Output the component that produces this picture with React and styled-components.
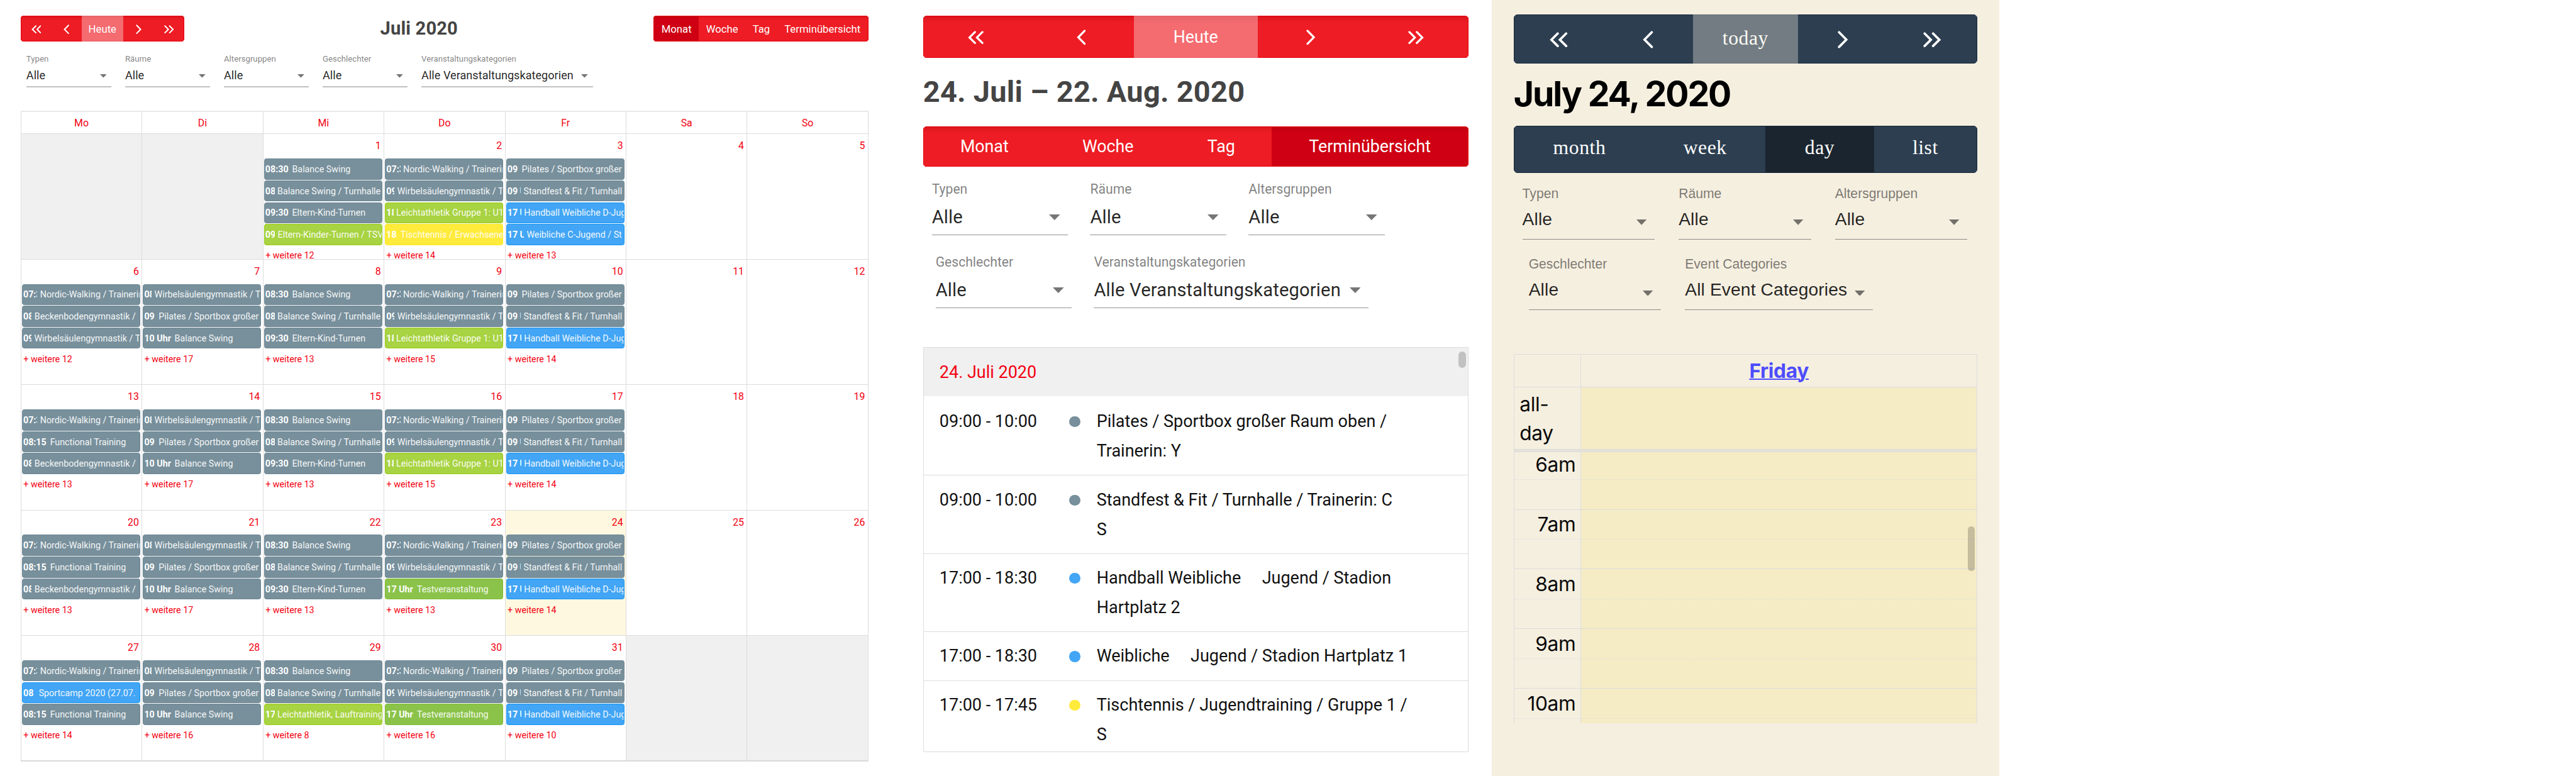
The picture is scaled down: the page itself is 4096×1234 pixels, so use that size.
import React from "react";
import styled, { createGlobalStyle, ThemeProvider, css } from "styled-components";

const GlobalStyle = createGlobalStyle`
  html, body { margin: 0; padding: 0; background: #fff; overflow: hidden; }
  *, *::before, *::after { box-sizing: border-box; }
`;

const roboto = `Roboto, "Liberation Sans", sans-serif`;
const arial = `"Liberation Sans", Arial, sans-serif`;
const inter = `Inter, Roboto, sans-serif`;
const times = `"Liberation Serif", "Times New Roman", serif`;

/* ---------- themes ---------- */

const monthTheme = {
  button: { bg: "#ee1c24", active: "#cf0013", edge: "#e2000b", shade: "rgba(150,0,0,.16)", font: roboto, size: 19, spacing: 0, radius: 5 },
  icon: 1,
  filter: {
    font: roboto, labelSize: 15, labelLine: 20, gap: 4.8, valueSize: 20.5, valueLine: 30, valueSpacing: 0.05,
    box: 36.3, border: "2.3px solid #c1c1c1", pad: 8.6, caretW: 12.3, caretH: 6.3, caretTop: 13.1,
    caret: "#757575", colGap: 24.8,
  },
};

const listTheme = {
  button: { bg: "#ee1c24", active: "#cf0013", edge: "#e2000b", shade: "rgba(150,0,0,.2)", font: roboto, size: 30.4, spacing: 0, radius: 6 },
  icon: 1.6,
  filter: {
    font: roboto, labelSize: 24, labelLine: 30, gap: 12.9, valueSize: 33, valueLine: 44, valueSpacing: 0.2,
    box: 54.7, border: "1.3px solid #949494", pad: 14.5, caretW: 20, caretH: 10.3, caretTop: 17.3,
    caret: "#757575", colGap: 39.7,
  },
};

const dayTheme = {
  button: { bg: "#2c3e50", active: "#1a252f", edge: "#14243a", shade: "rgba(0,0,0,0)", font: times, size: 36, spacing: 0.6, radius: 7 },
  icon: 1.82,
  filter: {
    font: arial, labelSize: 24, labelLine: 30, gap: 8.5, valueSize: 32, valueLine: 44, valueSpacing: 0.15,
    box: 59.1, border: "1.3px solid #8f8c84", pad: 14.6, caretW: 18.5, caretH: 10, caretTop: 23.1,
    caret: "#73706a", colGap: 43,
  },
};

/* ---------- page ---------- */

const Page = styled.main`
  zoom: 0.88143;
  display: flex;
  align-items: flex-start;
  width: 4647px;
  height: 1400px;
  overflow: hidden;
  background: #fff;
`;

const MonthPanel = styled.section`
  width: 1529.4px;
  margin-left: 37.2px;
  padding-top: 28.3px;
  font-family: ${roboto};
`;

const ListPanel = styled.section`
  width: 984.3px;
  margin-left: 98.6px;
  padding-top: 28.7px;
  font-family: ${roboto};
`;

const DayPanel = styled.section`
  width: 916.4px;
  height: 1400px;
  margin-left: 41.1px;
  padding: 26.4px 40px 0;
  background: #f5efe0;
  font-family: ${inter};
`;

/* ---------- toolbar ---------- */

const Toolbar = styled.header`
  display: flex;
  align-items: center;
  justify-content: space-between;
`;

const Group = styled.div`
  display: flex;
  height: ${(p) => p.$h}px;
  border-radius: ${(p) => p.theme.button.radius}px;
  overflow: hidden;
`;

const Button = styled.button`
  display: flex;
  align-items: center;
  justify-content: center;
  width: ${(p) => p.$w}px;
  margin: 0;
  padding: ${(p) => (p.$drop > 0 ? p.$drop * 2 : 0)}px 0 ${(p) => (p.$drop < 0 ? -p.$drop * 2 : 0)}px;
  border: 0 solid ${(p) => p.theme.button.edge};
  border-width: 1.2px 0;
  background: linear-gradient(${(p) => p.theme.button.shade}, transparent 16%) ${(p) => p.theme.button.bg};
  color: #fff;
  font: 400 ${(p) => p.theme.button.size}px ${(p) => p.theme.button.font};
  letter-spacing: ${(p) => p.theme.button.spacing}px;
  white-space: nowrap;
  & + & {
    box-shadow: inset 1px 0 0 rgba(0, 0, 0, ${(p) => (p.theme.icon > 1.7 ? 0 : 0.05)});
  }
  &:first-child { border-left-width: 1.2px; }
  &:last-child { border-right-width: 1.2px; }
  ${(p) => p.$active && css`background-color: ${p.theme.button.active};`}
  ${(p) => p.$muted && css`opacity: 0.65;`}
`;

const Chevron = styled.svg`
  display: block;
  width: ${(p) => p.$w * p.theme.icon}px;
  height: ${(p) => p.$h * p.theme.icon}px;
  fill: none;
  stroke: #fff;
  stroke-width: 2.3;
  stroke-linecap: round;
  stroke-linejoin: miter;
  transform: ${(p) => (p.$flip ? "scaleX(-1)" : "none")};
`;

const Single = ({ flip }) => (
  <Chevron $w={10.4} $h={17.4} $flip={flip} viewBox="0 0 10.4 17.4">
    <path d="M9 1.4 L1.8 8.7 L9 16" />
  </Chevron>
);

const Double = ({ flip }) => (
  <Chevron $w={17.8} $h={15.2} $flip={flip} viewBox="0 0 17.8 15.2">
    <path d="M8 1.4 L1.8 7.6 L8 13.8 M16.4 1.4 L10.2 7.6 L16.4 13.8" />
  </Chevron>
);

function NavGroup({ height, widths, label, drop = 0, iconDrop = 0 }) {
  return (
    <Group $h={height}>
      <Button $w={widths[0]} $drop={iconDrop}><Double /></Button>
      <Button $w={widths[1]} $drop={iconDrop}><Single /></Button>
      <Button $w={widths[2]} $drop={drop} $muted>{label}</Button>
      <Button $w={widths[3]} $drop={iconDrop}><Single flip /></Button>
      <Button $w={widths[4]} $drop={iconDrop}><Double flip /></Button>
    </Group>
  );
}

function ViewGroup({ height, items, active, drop = 0 }) {
  return (
    <Group $h={height}>
      {items.map(([label, w]) => (
        <Button key={label} $w={w} $drop={drop} $active={label === active}>{label}</Button>
      ))}
    </Group>
  );
}

const Title = styled.h2`
  margin: ${(p) => p.$margin || "0"};
  font: 700 ${(p) => p.$size}px/${(p) => p.$line}px ${(p) => p.$font || roboto};
  letter-spacing: ${(p) => p.$spacing || 0}px;
  color: ${(p) => p.$color || "#444"};
  white-space: nowrap;
`;

/* ---------- filters ---------- */

const Filters = styled.div`
  display: flex;
  gap: ${(p) => p.theme.filter.colGap}px;
  margin-top: ${(p) => p.$top}px;
  padding-left: ${(p) => p.$left}px;
  font-family: ${(p) => p.theme.filter.font};
`;

const Field = styled.div`
  width: ${(p) => p.$w}px;
`;

const FieldLabel = styled.div`
  font-size: ${(p) => p.theme.filter.labelSize}px;
  line-height: ${(p) => p.theme.filter.labelLine}px;
  color: rgba(0, 0, 0, 0.5);
  white-space: nowrap;
`;

const FieldBox = styled.div`
  display: flex;
  justify-content: space-between;
  height: ${(p) => p.theme.filter.box}px;
  margin-top: ${(p) => p.theme.filter.gap}px;
  padding-right: ${(p) => p.theme.filter.pad}px;
  border-bottom: ${(p) => p.theme.filter.border};
  font-size: ${(p) => p.theme.filter.valueSize}px;
  line-height: ${(p) => p.theme.filter.valueLine}px;
  letter-spacing: ${(p) => p.theme.filter.valueSpacing}px;
  color: rgba(0, 0, 0, 0.87);
  white-space: nowrap;
`;

const Caret = styled.svg`
  display: block;
  flex: none;
  width: ${(p) => p.theme.filter.caretW}px;
  height: ${(p) => p.theme.filter.caretH}px;
  margin-top: ${(p) => p.theme.filter.caretTop}px;
  fill: ${(p) => p.theme.filter.caret};
`;

function Select({ label, value = "Alle", width }) {
  return (
    <Field $w={width}>
      <FieldLabel>{label}</FieldLabel>
      <FieldBox>
        <span>{value}</span>
        <Caret viewBox="0 0 20 10" preserveAspectRatio="none"><polygon points="0,0 20,0 10,10" /></Caret>
      </FieldBox>
    </Field>
  );
}

/* ---------- month grid ---------- */

const MonthGrid = styled.div`
  display: grid;
  grid-template-columns: repeat(7, 1fr);
  grid-template-rows: 38.3px repeat(5, 226.3px);
  margin-top: 42.7px;
  border-top: 2.3px solid #e9e9e9;
  border-right: 1.2px solid #ddd;
  border-bottom: 2.3px solid #dadada;
`;

const WeekDay = styled.div`
  padding-top: 8px;
  border-left: 1.2px solid #ddd;
  font-size: 18px;
  line-height: 26px;
  color: #f30010;
  text-align: center;
`;

const DayCell = styled.div`
  min-width: 0;
  border-top: 1.2px solid #ddd;
  border-left: 1.2px solid #ddd;
  overflow: hidden;
  background: ${(p) => (p.$off ? "#f0f0f0" : p.$today ? "#fff8e0" : "#fff")};
`;

const DayNumber = styled.div`
  height: 44.2px;
  padding: 9.2px 5px 0 0;
  font-size: 18px;
  line-height: 26px;
  color: #f30010;
  text-align: right;
`;

const palette = {
  slate: ["#78909c", "#6b8592"],
  lime: ["#a8d342", "#98cb12"],
  yellow: ["#ffeb3b", "#ffe925"],
  blue: ["#42a5f5", "#1494f3"],
  green: ["#8bc34a", "#7cbb2e"],
};

const EventBar = styled.div`
  display: flex;
  height: 38px;
  margin: 0 2.6px 1.4px 1.3px;
  padding: 1px 0 0 1.2px;
  border: 1.2px solid ${(p) => palette[p.$tone][1]};
  border-radius: 4px;
  background: ${(p) => palette[p.$tone][0]};
  color: #fff;
  font-size: 16.2px;
  line-height: 35px;
  white-space: nowrap;
  overflow: hidden;
`;

const EventTime = styled.b`
  flex: none;
  width: ${(p) => p.$w}px;
  margin-right: 5px;
  overflow: hidden;
  font-weight: 700;
`;

const EventTitle = styled.span`
  flex: 1;
  min-width: 0;
  overflow: hidden;
  opacity: 0.93;
`;

const MoreLink = styled.div`
  margin: 7.2px 0 0 4px;
  font-size: 16.2px;
  line-height: 24px;
  color: #f30010;
`;

const E = {
  nordic: ["slate", "07:3", 25.4, "Nordic-Walking / Trainerin"],
  wirbelA: ["slate", "08", 13.4, "Wirbelsäulengymnastik / T"],
  wirbelB: ["slate", "09", 14.8, "Wirbelsäulengymnastik / T"],
  becken: ["slate", "08", 15.2, "Beckenbodengymnastik /"],
  func: ["slate", "08:15", 43.4, "Functional Training"],
  pilates: ["slate", "09", 21, "Pilates / Sportbox großer"],
  ten: ["slate", "10 Uhr", 49.6, "Balance Swing"],
  balance: ["slate", "08:30", 43.4, "Balance Swing"],
  balanceTH: ["slate", "08", 16.8, "Balance Swing / Turnhalle"],
  eltern: ["slate", "09:30", 43.4, "Eltern-Kind-Turnen"],
  kinder: ["lime", "09", 17.4, "Eltern-Kinder-Turnen / TSV"],
  leicht: ["lime", "18", 12.8, "Leichtathletik Gruppe 1: U1"],
  lauf: ["lime", "17", 16.8, "Leichtathletik, Lauftraining"],
  tisch: ["yellow", "18", 20.6, "Tischtennis / Erwachsene"],
  stand: ["slate", "09 U", 24.2, "Standfest & Fit / Turnhall"],
  hand: ["blue", "17 U", 25.2, "Handball Weibliche D-Jug"],
  weib: ["blue", "17 U", 29.8, "Weibliche C-Jugend / St"],
  test: ["green", "17 Uhr", 50.2, "Testveranstaltung"],
  camp: ["blue", "08", 23, "Sportcamp 2020 (27.07."],
};

const tue = [E.wirbelA, E.pilates, E.ten];
const wed = [E.balance, E.balanceTH, E.eltern];
const thu = [E.nordic, E.wirbelB, E.leicht];
const fri = [E.pilates, E.stand, E.hand];

const days = [
  { off: true }, { off: true },
  { n: 1, ev: [...wed, E.kinder], more: 12 },
  { n: 2, ev: [...thu, E.tisch], more: 14 },
  { n: 3, ev: [...fri, E.weib], more: 13 },
  { n: 4 }, { n: 5 },
  { n: 6, ev: [E.nordic, E.becken, E.wirbelB], more: 12 },
  { n: 7, ev: tue, more: 17 },
  { n: 8, ev: wed, more: 13 },
  { n: 9, ev: thu, more: 15 },
  { n: 10, ev: fri, more: 14 },
  { n: 11 }, { n: 12 },
  { n: 13, ev: [E.nordic, E.func, E.becken], more: 13 },
  { n: 14, ev: tue, more: 17 },
  { n: 15, ev: wed, more: 13 },
  { n: 16, ev: thu, more: 15 },
  { n: 17, ev: fri, more: 14 },
  { n: 18 }, { n: 19 },
  { n: 20, ev: [E.nordic, E.func, E.becken], more: 13 },
  { n: 21, ev: tue, more: 17 },
  { n: 22, ev: wed, more: 13 },
  { n: 23, ev: [E.nordic, E.wirbelB, E.test], more: 13 },
  { n: 24, ev: fri, more: 14, today: true },
  { n: 25 }, { n: 26 },
  { n: 27, ev: [E.nordic, E.camp, E.func], more: 14 },
  { n: 28, ev: tue, more: 16 },
  { n: 29, ev: [E.balance, E.balanceTH, E.lauf], more: 8 },
  { n: 30, ev: [E.nordic, E.wirbelB, E.test], more: 16 },
  { n: 31, ev: fri, more: 10 },
  { off: true }, { off: true },
];

function Month() {
  return (
    <MonthGrid>
      {["Mo", "Di", "Mi", "Do", "Fr", "Sa", "So"].map((d) => <WeekDay key={d}>{d}</WeekDay>)}
      {days.map((day, i) => (
        <DayCell key={i} $off={day.off} $today={day.today}>
          <DayNumber>{day.n}</DayNumber>
          {(day.ev || []).map(([tone, time, w, title], k) => (
            <EventBar key={k} $tone={tone}>
              <EventTime $w={w}>{time}</EventTime>
              <EventTitle>{title}</EventTitle>
            </EventBar>
          ))}
          {day.more && <MoreLink>+ weitere {day.more}</MoreLink>}
        </DayCell>
      ))}
    </MonthGrid>
  );
}

/* ---------- list ---------- */

const ListBox = styled.div`
  position: relative;
  height: 730px;
  margin-top: 70.6px;
  border: 1.2px solid #ddd;
  overflow: hidden;
`;

const ListHeading = styled.div`
  height: 87.4px;
  padding: 18px 28.5px 0;
  background: #f0f0f0;
  font-size: 30.6px;
  line-height: 53px;
  color: #f30010;
`;

const ListRow = styled.div`
  display: grid;
  grid-template-columns: 234.2px 49.3px 1fr;
  padding: 19px 20px 17.3px 28.5px;
  font-size: 30.6px;
  line-height: 52.8px;
  color: #111;
  white-space: pre;
  & + & {
    border-top: 1.2px solid #ddd;
    padding-top: 17.6px;
    padding-bottom: 16.6px;
  }
`;

const Dot = styled.span`
  width: 19.6px;
  height: 19.6px;
  margin-top: 17px;
  border-radius: 50%;
  background: ${(p) => palette[p.$tone][0]};
`;

const ListThumb = styled.span`
  position: absolute;
  top: 6px;
  right: 4px;
  width: 13px;
  height: 30px;
  border-radius: 7px;
  background: #c1c1c1;
`;

const gap = "\u00a0".repeat(5);
const rows = [
  ["09:00 - 10:00", "slate", "Pilates / Sportbox großer Raum oben /\nTrainerin: Y"],
  ["09:00 - 10:00", "slate", "Standfest & Fit / Turnhalle / Trainerin: C\nS"],
  ["17:00 - 18:30", "blue", `Handball Weibliche${gap}Jugend / Stadion\nHartplatz 2`],
  ["17:00 - 18:30", "blue", `Weibliche${gap}Jugend / Stadion Hartplatz 1`],
  ["17:00 - 17:45", "yellow", "Tischtennis / Jugendtraining / Gruppe 1 /\nS"],
];

/* ---------- day grid ---------- */

const line = "1.2px solid #dcdcdc";

const DayGrid = styled.div`
  position: relative;
  height: 666px;
  margin-top: 78.8px;
  border: ${line};
  border-bottom: 0;
  overflow: hidden;
  font-size: 36px;
  letter-spacing: -0.4px;
  color: #0a0a0a;
`;

const DayRow = styled.div`
  display: grid;
  grid-template-columns: 121px 1fr;
  height: ${(p) => p.$h}px;
`;

const Axis = styled.div`
  padding: 5px 0 0 9.6px;
  border-right: ${line};
  line-height: 51.6px;
`;

const DayHead = styled.div`
  border-bottom: ${line};
  text-align: center;
  font-weight: 700;
  font-size: 36px;
  letter-spacing: -0.4px;
  line-height: 58px;
  color: #4d4dff;
  text-decoration: underline;
  text-decoration-thickness: 2.3px;
`;

const HeadCorner = styled(Axis)`
  border-bottom: ${line};
`;

const Lane = styled.div`
  background: #f5ecc5;
`;

const Divider = styled.div`
  height: 5.6px;
  border-top: ${line};
  border-bottom: ${line};
  background: #e5e2d9;
`;

const SlotArea = styled.div`
  margin-top: -3.6px;
`;

const SlotClip = styled.div`
  height: 491px;
  overflow: hidden;
`;

const slotLine = css`
  border-bottom: 1.2px ${(p) => (p.$minor ? "solid #dcdcdc" : "dotted #dcdcdc")};
`;

const SlotAxis = styled.div`
  padding: 2px 9px 0 0;
  border-right: ${line};
  line-height: 51px;
  text-align: right;
  ${slotLine}
`;

const SlotLane = styled(Lane)`
  ${slotLine}
`;

const DayThumb = styled.span`
  position: absolute;
  top: 310px;
  right: 3.6px;
  width: 12.6px;
  height: 80px;
  border-radius: 6px;
  background: rgba(100, 95, 80, 0.33);
`;

const hours = ["6am", "7am", "8am", "9am", "10am"];

function Day() {
  return (
    <DayGrid>
      <DayRow $h={59}><HeadCorner /><DayHead>Friday</DayHead></DayRow>
      <DayRow $h={111.3}><Axis>all-<br />day</Axis><Lane /></DayRow>
      <Divider />
      <SlotClip>
        <SlotArea>
          {hours.map((h) => (
            <React.Fragment key={h}>
              <DayRow $h={54.3}><SlotAxis>{h}</SlotAxis><SlotLane /></DayRow>
              <DayRow $h={53.4}><SlotAxis $minor /><SlotLane $minor /></DayRow>
            </React.Fragment>
          ))}
        </SlotArea>
      </SlotClip>
      <DayThumb />
    </DayGrid>
  );
}

export default function App() {
  return (
    <>
      <GlobalStyle />
      <Page>
        <ThemeProvider theme={monthTheme}>
          <MonthPanel>
            <Toolbar>
              <NavGroup height={47} widths={[54.9, 55, 75.3, 56, 54.4]} label="Heute" drop={0.6} iconDrop={1} />
              <Title $size={33} $line={40} $spacing={0.2}>Juli 2020</Title>
              <ViewGroup
                height={47} drop={0.6} active="Monat"
                items={[["Monat", 81.5], ["Woche", 84.3], ["Tag", 57], ["Terminübersicht", 164.8]]}
              />
            </Toolbar>
            <Filters $top={21.1} $left={10.3}>
              <Select label="Typen" width={153.4} />
              <Select label="Räume" width={153.4} />
              <Select label="Altersgruppen" width={153.4} />
              <Select label="Geschlechter" width={153.4} />
              <Select label="Veranstaltungskategorien" value="Alle Veranstaltungskategorien" width={309.2} />
            </Filters>
            <Month />
          </MonthPanel>
        </ThemeProvider>

        <ThemeProvider theme={listTheme}>
          <ListPanel>
            <NavGroup height={75.4} widths={[189.8, 190.3, 223.5, 191, 189.7]} label="Heute" iconDrop={1.4} />
            <Title $size={53.2} $line={60} $spacing={0.3} $margin="31.8px 0 31.8px">24. Juli – 22. Aug. 2020</Title>
            <ViewGroup
              height={73.1} active="Terminübersicht"
              items={[["Monat", 220.2], ["Woche", 226.8], ["Tag", 181.8], ["Terminübersicht", 355.5]]}
            />
            <Filters $top={26} $left={15.8}>
              <Select label="Typen" width={246} />
              <Select label="Räume" width={246} />
              <Select label="Altersgruppen" width={246} />
            </Filters>
            <Filters $top={34.2} $left={22.6}>
              <Select label="Geschlechter" width={246} />
              <Select label="Veranstaltungskategorien" value="Alle Veranstaltungskategorien" width={495.4} />
            </Filters>
            <ListBox>
              <ListHeading>24. Juli 2020</ListHeading>
              {rows.map(([time, tone, text], i) => (
                <ListRow key={i}><span>{time}</span><Dot $tone={tone} /><span>{text}</span></ListRow>
              ))}
              <ListThumb />
            </ListBox>
          </ListPanel>
        </ThemeProvider>

        <ThemeProvider theme={dayTheme}>
          <DayPanel>
            <NavGroup height={88.6} widths={[161.6, 161.6, 190, 161.6, 161.6]} label="today" drop={-1} iconDrop={1.2} />
            <Title $size={62.7} $line={70} $font={inter} $spacing={-2.4} $color="#000" $margin="19.4px 0 22.2px">
              July 24, 2020
            </Title>
            <ViewGroup
              height={85.4} active="day" drop={-3}
              items={[["month", 236.3], ["week", 218.1], ["day", 195.7], ["list", 186.3]]}
            />
            <Filters $top={22.4} $left={15.7}>
              <Select label="Typen" width={239} />
              <Select label="Räume" width={239} />
              <Select label="Altersgruppen" width={239} />
            </Filters>
            <Filters $top={30.2} $left={27.1}>
              <Select label="Geschlechter" width={239} />
              <Select label="Event Categories" value="All Event Categories" width={339} />
            </Filters>
            <Day />
          </DayPanel>
        </ThemeProvider>
      </Page>
    </>
  );
}
